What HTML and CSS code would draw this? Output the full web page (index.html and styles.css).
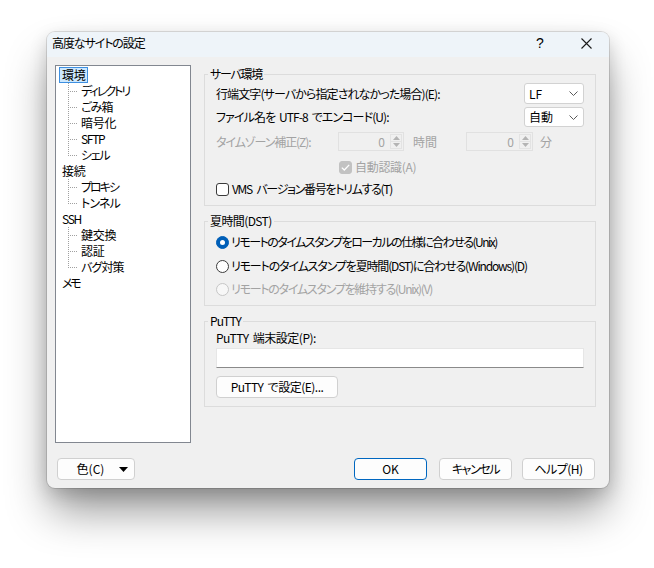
FILE: index.html
```html
<!DOCTYPE html>
<html lang="ja">
<head>
<meta charset="utf-8">
<title>高度なサイトの設定</title>
<link rel="stylesheet" href="styles.css">
</head>
<body>
<div class="dialog">
  <div class="titlebar">
    <span class="title">高度なサイトの設定</span>
    <span class="tbtn help">?</span>
    <span class="tbtn close"><svg width="11" height="11" viewBox="0 0 11 11"><path d="M0.5 0.5L10.5 10.5M10.5 0.5L0.5 10.5" stroke="#1a1a1a" stroke-width="1.1" fill="none"/></svg></span>
  </div>
  <div class="body">
    <div class="main">
      <div class="tree">
        <ul class="roots">
          <li><span class="node sel kj">環境</span>
            <ul class="children">
              <li><span class="conn"></span><span class="node k2">ディレクトリ</span></li>
              <li><span class="conn"></span><span class="node k1">ごみ箱</span></li>
              <li><span class="conn"></span><span class="node kj">暗号化</span></li>
              <li><span class="conn"></span><span class="node">SFTP</span></li>
              <li><span class="conn last"></span><span class="node">シェル</span></li>
            </ul>
          </li>
          <li><span class="node kj">接続</span>
            <ul class="children">
              <li><span class="conn"></span><span class="node k2">プロキシ</span></li>
              <li><span class="conn last"></span><span class="node k1">トンネル</span></li>
            </ul>
          </li>
          <li><span class="node">SSH</span>
            <ul class="children">
              <li><span class="conn"></span><span class="node kj">鍵交換</span></li>
              <li><span class="conn"></span><span class="node kj">認証</span></li>
              <li><span class="conn last"></span><span class="node k1">バグ対策</span></li>
            </ul>
          </li>
          <li><span class="node k3">メモ</span></li>
        </ul>
      </div>
      <div class="panel">
        <fieldset class="group g1">
          <legend class="lg1">サーバ環境</legend>
          <div class="row r1">
            <span class="grow">行端文字(サーバから指定されなかった場合)(E):</span>
            <span class="select"><span class="sv">LF</span><svg width="9" height="5" viewBox="0 0 9 5"><path d="M0.5 0.5L4.5 4.5L8.5 0.5" stroke="#5a5a5a" fill="none"/></svg></span>
          </div>
          <div class="row r2">
            <span class="grow">ファイル名を UTF-8 でエンコード(U):</span>
            <span class="select"><span class="sv">自動</span><svg width="9" height="5" viewBox="0 0 9 5"><path d="M0.5 0.5L4.5 4.5L8.5 0.5" stroke="#5a5a5a" fill="none"/></svg></span>
          </div>
          <div class="row r3 disabled">
            <span class="tzlabel"><span class="tzt">タイムゾーン補正(Z):</span></span>
            <span class="spin"><span class="val">0</span><span class="arrows"><span class="ar"><svg width="7" height="4" viewBox="0 0 7 4"><path d="M0 4L3.5 0L7 4Z" fill="#b4b4b4"/></svg></span><span class="ar"><svg width="7" height="4" viewBox="0 0 7 4"><path d="M0 0L3.5 4L7 0Z" fill="#b4b4b4"/></svg></span></span></span>
            <span class="unit u1">時間</span>
            <span class="spin s2"><span class="val">0</span><span class="arrows"><span class="ar"><svg width="7" height="4" viewBox="0 0 7 4"><path d="M0 4L3.5 0L7 4Z" fill="#b4b4b4"/></svg></span><span class="ar"><svg width="7" height="4" viewBox="0 0 7 4"><path d="M0 0L3.5 4L7 0Z" fill="#b4b4b4"/></svg></span></span></span>
            <span class="unit u2">分</span>
          </div>
          <div class="row r4 disabled">
            <span class="check checked-dis"><svg width="9" height="7" viewBox="0 0 9 7"><path d="M0.8 3.6L3.3 6L8.2 0.9" stroke="#fff" stroke-width="1.3" fill="none"/></svg></span>
            <span class="ctext c4">自動認識(A)</span>
          </div>
          <div class="row r5">
            <span class="check"></span>
            <span class="ctext c5">VMS バージョン番号をトリムする(T)</span>
          </div>
        </fieldset>
        <fieldset class="group g2">
          <legend class="lg2">夏時間(DST)</legend>
          <div class="row rr1">
            <span class="radio on"><span class="dot"></span></span>
            <span class="rtext t1">リモートのタイムスタンプをローカルの仕様に合わせる(Unix)</span>
          </div>
          <div class="row rr2">
            <span class="radio"></span>
            <span class="rtext t2">リモートのタイムスタンプを夏時間(DST)に合わせる(Windows)(D)</span>
          </div>
          <div class="row rr3 disabled">
            <span class="radio dis"></span>
            <span class="rtext t3">リモートのタイムスタンプを維持する(Unix)(V)</span>
          </div>
        </fieldset>
        <fieldset class="group g3">
          <legend class="lg3">PuTTY</legend>
          <div class="row p1">PuTTY 端末設定(P):</div>
          <div class="textbox"></div>
          <button class="btn putty">PuTTY で設定(E)...</button>
        </fieldset>
      </div>
    </div>
    <div class="footer">
      <button class="btn color"><span class="ctxt">色(C)</span><svg width="9" height="5" viewBox="0 0 9 5"><path d="M0 0H9L4.5 5Z" fill="#000"/></svg></button>
      <span class="spacer"></span>
      <button class="btn ok">OK</button>
      <button class="btn cancel">キャンセル</button>
      <button class="btn helpbtn">ヘルプ(H)</button>
    </div>
  </div>
</div>
</body>
</html>
```

FILE: styles.css
```css
* { box-sizing: border-box; }
html { margin: 0; padding: 0; background: #ffffff; height: 100%; }
body {
  margin: 0;
  min-height: 568px;
  padding: 32px 0 0 47px;
  background: #ffffff;
  font-family: "Noto Sans CJK JP", "Noto Sans", sans-serif;
  font-size: 12px;
  line-height: 16px;
  color: #000;
  font-feature-settings: "palt" 1;
}
.dialog {
  width: 562px;
  height: 456px;
  border-radius: 8px;
  background: #f0f0f0;
  box-shadow: 0 26px 44px -4px rgba(0,0,0,0.42), 0 6px 18px rgba(0,0,0,0.16), 0 0 0 1px rgba(0,0,0,0.12);
  display: flex;
  flex-direction: column;
}
.titlebar {
  height: 25px;
  background: #eef4f9;
  border-radius: 8px 8px 0 0;
  display: flex;
  align-items: center;
  flex: none;
  padding-bottom: 3px;
}
.title { flex: 1; padding-left: 5px; letter-spacing: -1.1px; }
.tbtn { width: 46px; height: 22px; display: flex; align-items: center; justify-content: center; }
.help { font-family: "Liberation Sans", sans-serif; font-size: 14px; }
.body { flex: 1; display: flex; flex-direction: column; }
.main { display: flex; padding: 8px 13px 0 8px; gap: 13px; }
.tree {
  width: 136px;
  height: 378px;
  background: #fff;
  border: 1px solid #828790;
  padding-top: 1px;
}
.tree ul { list-style: none; margin: 0; padding: 0; }
.roots > li > .node { margin-left: 3px; }
.node {
  display: block;
  width: fit-content;
  height: 16px;
  line-height: 14px;
  padding: 0 2px;
  border: 1px solid transparent;
  white-space: nowrap;
  letter-spacing: -1.3px;
}
.node.kj { letter-spacing: -0.3px; }
.node.k1 { letter-spacing: -0.9px; }
.node.k2 { letter-spacing: -2px; }
.node.k3 { letter-spacing: -2.4px; }
.node.sel { background: #cce8ff; border-color: #3e8fe0; }
.children li { display: flex; height: 16px; }
.tree .children { padding-left: 12px; }
.conn {
  width: 10px;
  height: 16px;
  flex: none;
  background-image:
    repeating-linear-gradient(to bottom, #a0a0a0 0 1px, transparent 1px 2px),
    repeating-linear-gradient(to right, #a0a0a0 0 1px, transparent 1px 2px);
  background-size: 1px 16px, 10px 1px;
  background-position: 0 0, 0 8px;
  background-repeat: no-repeat;
}
.conn.last { background-size: 1px 9px, 10px 1px; }
.panel { width: 392px; padding-top: 1px; }
.group {
  margin: 0;
  border: 1px solid #dcdcdc;
  padding: 0 11px 8px 11px;
  min-width: 0;
}
.group legend { padding: 0 2px; margin-left: -8px; line-height: 16px; }
.lg1 { letter-spacing: -1.3px; }
.lg2 { letter-spacing: -0.6px; }
.lg3 { letter-spacing: -0.8px; }
.g2, .g3 { margin-top: 7px; }
.row { display: flex; align-items: center; white-space: nowrap; }
.grow { flex: 1; letter-spacing: -0.9px; word-spacing: 2px; }
.r1 { height: 21px; margin-top: 1px; }
.r2 { height: 20px; margin-top: 3px; }
.r3 { height: 19px; margin-top: 5px; }
.r4 { height: 16px; margin-top: 8px; padding-left: 123px; }
.r5 { height: 16px; margin-top: 6px; }
.disabled { color: #a3a3a3; }
.select {
  width: 60px;
  height: 100%;
  background: #fff;
  border: 1px solid #d2d2d2;
  border-radius: 3px;
  display: flex;
  align-items: center;
  padding: 0 5px 0 4px;
  letter-spacing: 0;
}
.sv { flex: 1; }
.tzlabel { width: 122px; }
.tzt { letter-spacing: -1.1px; }
.spin {
  width: 66px;
  height: 19px;
  border: 1px solid #e1e1e1;
  background: #f0f0f0;
  display: flex;
}
.s2 { width: 67px; }
.val { flex: 1; text-align: right; padding-right: 5px; line-height: 17px; }
.arrows { width: 13px; display: flex; flex-direction: column; padding: 1px 1px 1px 0; }
.ar { flex: 1; display: flex; align-items: center; justify-content: center; border: 1px solid #e3e3e3; }
.ar + .ar { border-top: none; }
.u1 { margin-left: 9px; width: 53px; }
.u2 { margin-left: 7px; }
.check {
  width: 13px;
  height: 13px;
  border: 1px solid #3a3a3a;
  border-radius: 3px;
  background: #fff;
  flex: none;
  display: flex;
  align-items: center;
  justify-content: center;
}
.check.checked-dis { border-color: #c2c2c2; background: #c2c2c2; }
.ctext { margin-left: 3px; }
.c4 { letter-spacing: -0.3px; }
.c5 { letter-spacing: -1.3px; word-spacing: 3px; }
.rr1 { height: 16px; margin-top: 5px; }
.rr2 { height: 16px; margin-top: 8px; }
.rr3 { height: 16px; margin-top: 7px; }
.radio {
  width: 13px;
  height: 13px;
  border-radius: 50%;
  border: 1px solid #3c3c3c;
  background: #fff;
  flex: none;
  display: flex;
  align-items: center;
  justify-content: center;
}
.radio.on { background: #005fb8; border-color: #005fb8; }
.radio .dot { width: 5px; height: 5px; border-radius: 50%; background: #fff; }
.radio.dis { border-color: #c6c6c6; background: #f7f7f7; }
.rtext { margin-left: 2px; }
.t1 { letter-spacing: -1.5px; }
.t2 { letter-spacing: -1.15px; }
.t3 { letter-spacing: -1.25px; }
.p1 { height: 16px; margin-top: 1px; letter-spacing: -0.5px; word-spacing: 2px; }
.textbox {
  margin-top: 2px;
  height: 20px;
  width: 368px;
  background: #fff;
  border: 1px solid #e6e6e6;
  border-bottom-color: #8a8a8a;
}
.btn {
  font: inherit;
  font-feature-settings: "palt" 1;
  color: #000;
  height: 22px;
  background: #fdfdfd;
  border: 1px solid #d0d0d0;
  border-radius: 4px;
  padding: 0;
  line-height: 18px;
}
.putty { display: block; margin-top: 8px; width: 122px; letter-spacing: -0.5px; word-spacing: 2px; }
.footer { display: flex; padding: 15px 14px 0 10px; align-items: center; }
.color { width: 78px; display: flex; align-items: center; padding-right: 6px; }
.ctxt { flex: 1; text-align: center; padding-left: 4px; }
.spacer { flex: 1; }
.ok, .cancel, .helpbtn { width: 73px; }
.ok { border-color: #0067c0; }
.cancel { margin-left: 12px; letter-spacing: -1.4px; }
.helpbtn { margin-left: 10px; letter-spacing: -0.5px; }
```
